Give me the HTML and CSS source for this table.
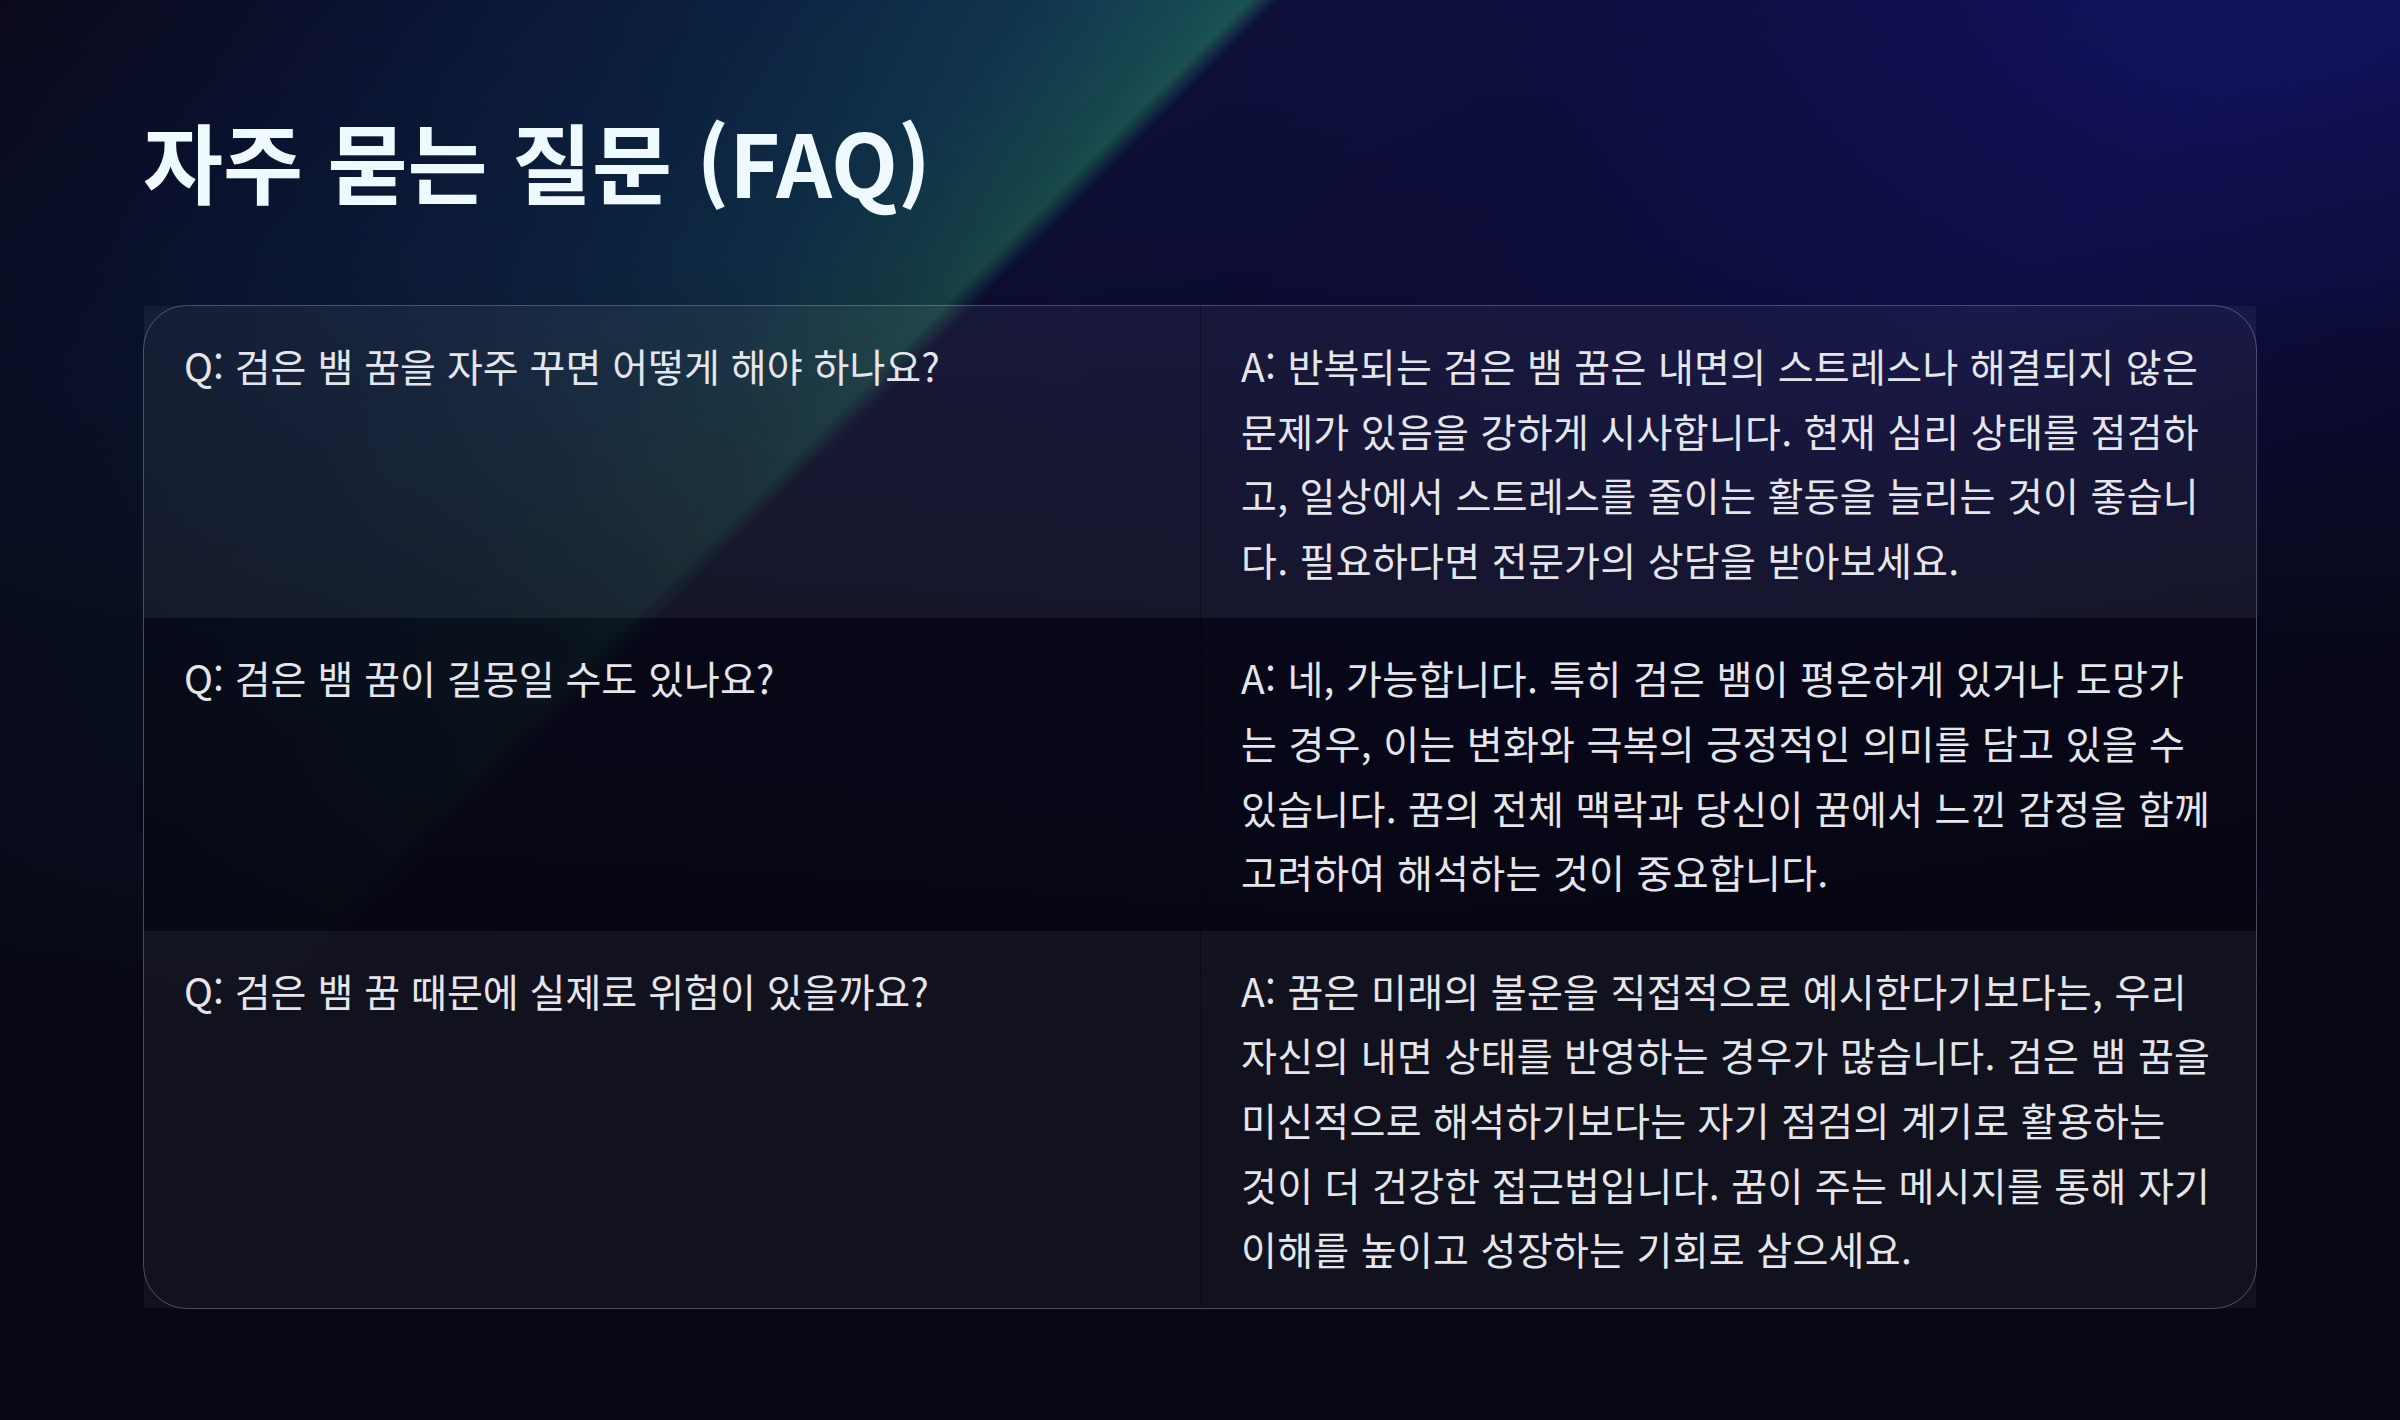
FILE: index.html
```html
<!DOCTYPE html>
<html lang="ko">
<head>
<meta charset="utf-8">
<title>자주 묻는 질문 (FAQ)</title>
<link rel="stylesheet" href="styles.css">
</head>
<body>
<main class="page">
  <h1 class="title">자주 묻는 질문 (FAQ)</h1>
  <table class="faq">
    <colgroup><col class="col-q"><col class="col-a"></colgroup>
    <tbody>
      <tr class="row row-1">
        <td class="cell q">Q: 검은 뱀 꿈을 자주 꾸면 어떻게 해야 하나요?</td>
        <td class="cell a">A: 반복되는 검은 뱀 꿈은 내면의 스트레스나 해결되지 않은<br>문제가 있음을 강하게 시사합니다. 현재 심리 상태를 점검하<br>고, 일상에서 스트레스를 줄이는 활동을 늘리는 것이 좋습니<br>다. 필요하다면 전문가의 상담을 받아보세요.</td>
      </tr>
      <tr class="row row-2">
        <td class="cell q">Q: 검은 뱀 꿈이 길몽일 수도 있나요?</td>
        <td class="cell a">A: 네, 가능합니다. 특히 검은 뱀이 평온하게 있거나 도망가<br>는 경우, 이는 변화와 극복의 긍정적인 의미를 담고 있을 수<br>있습니다. 꿈의 전체 맥락과 당신이 꿈에서 느낀 감정을 함께<br>고려하여 해석하는 것이 중요합니다.</td>
      </tr>
      <tr class="row row-3">
        <td class="cell q">Q: 검은 뱀 꿈 때문에 실제로 위험이 있을까요?</td>
        <td class="cell a">A: 꿈은 미래의 불운을 직접적으로 예시한다기보다는, 우리<br>자신의 내면 상태를 반영하는 경우가 많습니다. 검은 뱀 꿈을<br>미신적으로 해석하기보다는 자기 점검의 계기로 활용하는<br>것이 더 건강한 접근법입니다. 꿈이 주는 메시지를 통해 자기<br>이해를 높이고 성장하는 기회로 삼으세요.</td>
      </tr>
    </tbody>
  </table>
</main>
</body>
</html>
```
FILE: styles.css
```css
* { box-sizing: border-box; }

html, body {
  margin: 0;
  padding: 0;
  background: #080814;
}

body {
  font-family: "Noto Sans CJK KR", "Noto Sans", sans-serif;
  color: #e4e6ec;
}

.page {
  min-height: 100vh;
  padding: 108px 143px 0;
  background:
    linear-gradient(to bottom, rgba(8, 8, 20, 0) 0%, rgba(8, 8, 20, 0.2) 18%, rgba(8, 8, 20, 0.78) 45%, #080814 72%),
    radial-gradient(ellipse 800px 420px at 2300px 40px, rgba(24, 24, 120, 0.35), rgba(24, 24, 120, 0) 100%),
    linear-gradient(135deg, #0a0a1c 0%, #0a1230 10%, #0c2242 20%, #10344e 27%, #174a52 31.5%, #1b5454 32.7%, #0d0f3a 33.5%, #0d0d40 45%, #0e0e50 60%, #0b0b34 80%, #080818 100%);
}

.title {
  margin: 0 0 93px;
  font-size: 87px;
  line-height: 104px;
  font-weight: 700;
  color: #eefaff;
}

.faq {
  width: 100%;
  table-layout: fixed;
  border-collapse: separate;
  border-spacing: 0;
  border: 1px solid rgba(190, 195, 220, 0.35);
  border-radius: 44px;
}

.col-q, .col-a { width: 50%; }

.cell {
  padding: 27px 40px;
  vertical-align: top;
  font-size: 39px;
  line-height: 64.6px;
  font-weight: 400;
  color: #e4e6ec;
}

.cell.a {
  padding-right: 30px;
  letter-spacing: 0.3px;
  border-left: 1px solid rgba(0, 0, 0, 0.35);
}

.row-1 .cell { background: rgba(255, 255, 255, 0.05); }
.row-2 .cell { background: rgba(0, 0, 0, 0.15); }
.row-3 .cell { background: rgba(255, 255, 255, 0.045); }
```
